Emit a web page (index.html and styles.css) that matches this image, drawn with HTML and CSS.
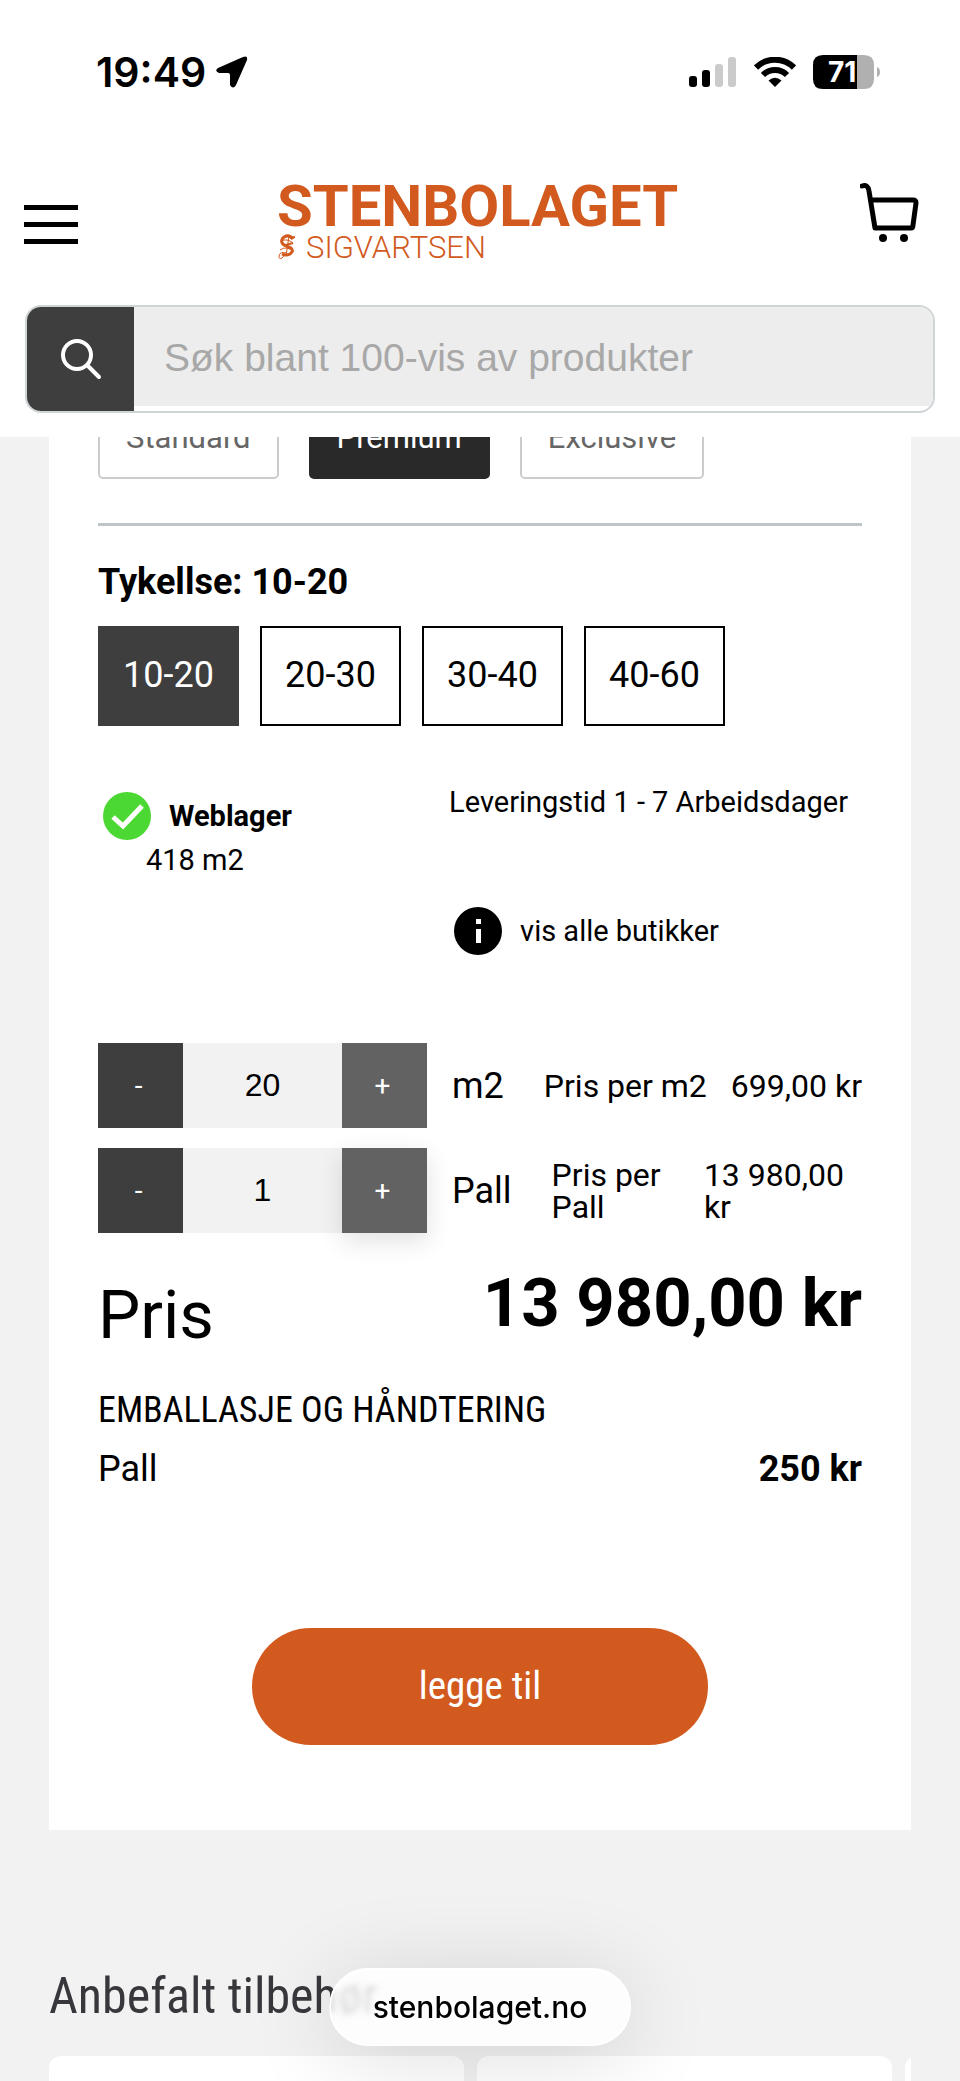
FILE: index.html
```html
<!DOCTYPE html>

<html lang="no">
  <head>
    <meta charset="UTF-8" />
    <meta name="viewport" content="width=device-width,initial-scale=1" />

    <title>Stenbolaget</title>

    <link rel="stylesheet" href="styles.css">
  </head>

  <body>
    <header class="header">
      <div class="status">
        <div class="status-group">
          <span class="time">19:49</span>
          <svg width="32" height="32" viewBox="0 0 32 32">
            <path d="M2 12 L27 1 Q32 -1 31 4 L20 29 Q17 34 14 29 L14 19 Q14 17 12 17 L3 17 Q-2 15 2 12Z" />
          </svg>
        </div>
        <div class="status-group status-icons">
          <svg width="48" height="30" viewBox="0 0 48 30">
            <rect x="0" y="19" width="8" height="11" rx="3" />
            <rect x="13" y="13" width="8" height="17" rx="3" />
            <rect x="26" y="7" width="8" height="23" rx="3" fill="#cbcbcb" />
            <rect x="39" y="0" width="8" height="30" rx="3" fill="#cbcbcb" />
          </svg>
          <svg width="42" height="30" viewBox="0 0 42 30">
            <g fill="none" stroke="#000" stroke-width="6">
              <path d="M2 10.500 A27 27 0 0 1 40 10.500" />
              <path d="M9 18 A17 17 0 0 1 33 18" />
            </g>
            <path d="M21 30 L14.500 23.500 Q21 18 27.500 23.500Z" />
          </svg>
          <svg width="68" height="34" viewBox="0 0 68 34">
            <path d="M10 0 H44 V34 H10 Q0 34 0 24 V10 Q0 0 10 0Z" />
            <path d="M44 0 H51 Q61 0 61 10 V24 Q61 34 51 34 H44Z" fill="#b0b0b0" />
            <path d="M64 12 Q67 13 67 17 Q67 21 64 22Z" fill="#b0b0b0" />
            <text class="battery-text" x="15" y="27">71</text>
          </svg>
        </div>
      </div>

      <div class="topbar">
        <button class="icon-button" type="button" aria-label="Meny">
          <svg width="54" height="40" viewBox="0 0 54 40">
            <path d="M0 2.500 H54 M0 19.500 H54 M0 36.500 H54" stroke="#000" stroke-width="5" />
          </svg>
        </button>
        <a class="logo" href="#" aria-label="Stenbolaget Sigvartsen">
          <svg width="410" height="84" viewBox="0 0 410 84">
            <text class="logo-name" x="0" y="43">STENBOLAGET</text>
            <text class="logo-sub" x="29" y="75">SIGVARTSEN</text>
            <g fill="none" stroke="#d25a1e">
              <path d="M16 56 Q12 51 7 54 Q2 58 7 62 L14 65 Q17 68 13 71 Q9 73 5 71" stroke-width="3" />
              <path d="M4 58 Q10 55 16 60 M3 67 Q10 62 17 69 M12 53 L9 73" stroke-width="1" />
              <path d="M13 55 L18 54 M9 62 L16 60" stroke-width="2" />
              <path d="M9 70 Q3 68 2 73 Q2 77 5 75 Q8 73 6 71" stroke-width="1" />
            </g>
          </svg>
        </a>
        <a class="cart" href="#" aria-label="Handlekurv">
          <svg width="60" height="60" viewBox="0 0 60 60">
            <path d="M2 3 Q8 1 9 8 L15 45 H51 Q53 45 53 42 L56 20 Q56 17 53 17 H11" fill="none" stroke="#000" stroke-width="5" stroke-linecap="round" stroke-linejoin="round" />
            <circle cx="23" cy="55" r="4" />
            <circle cx="44" cy="55" r="4" />
          </svg>
        </a>
      </div>

      <form class="search">
        <button type="submit" aria-label="Søk">
          <svg width="42" height="42" viewBox="0 0 42 42" fill="none" stroke="#fff" stroke-width="4" stroke-linecap="round">
            <circle cx="17" cy="17" r="14" />
            <path d="M28 28 L39 39" />
          </svg>
        </button>
        <input type="search" placeholder="Søk blant 100-vis av produkter" aria-label="Søk blant 100-vis av produkter" />
      </form>
    </header>

    <main>
      <section class="card">
        <div class="grades">
          <button class="grade" type="button">Standard</button>
          <button class="grade selected" type="button">Premium</button>
          <button class="grade" type="button">Exclusive</button>
        </div>

        <hr />

        <h2 class="option-title">Tykellse: 10-20</h2>
        <div class="sizes">
          <button class="size selected" type="button">10-20</button>
          <button class="size" type="button">20-30</button>
          <button class="size" type="button">30-40</button>
          <button class="size" type="button">40-60</button>
        </div>

        <div class="stock">
          <div>
            <div class="stock-line">
              <svg width="48" height="48" viewBox="0 0 48 48">
                <circle cx="24" cy="24" r="24" fill="#4cd832" />
                <path d="M10 25 L20 34 L39 14" fill="none" stroke="#fff" stroke-width="5" />
              </svg>
              <strong>Weblager</strong>
            </div>
            <p class="amount">418 m2</p>
          </div>
          <div class="delivery">
            <p>Leveringstid 1 - 7 Arbeidsdager</p>
            <button class="stores" type="button">
              <svg width="48" height="48" viewBox="0 0 48 48">
                <circle cx="24" cy="24" r="24" />
                <path d="M22 12 H27 V17 H22Z M22 22 H27 V36 H22Z" fill="#fff" />
              </svg>
              vis alle butikker
            </button>
          </div>
        </div>

        <div class="quantities">
          <div class="quantity">
            <div class="stepper">
              <button type="button" aria-label="Færre m2">-</button>
              <input id="m2" type="text" value="20" />
              <button class="plus" type="button" aria-label="Flere m2">+</button>
            </div>
            <label for="m2">m2</label>
            <div class="unit-price">
              <span>Pris per m2</span>
              <span>699,00 kr</span>
            </div>
          </div>
          <div class="quantity">
            <div class="stepper">
              <button type="button" aria-label="Færre paller">-</button>
              <input id="pall" type="text" value="1" />
              <button class="plus raised" type="button" aria-label="Flere paller">+</button>
            </div>
            <label for="pall">Pall</label>
            <div class="unit-price wrapped">
              <span>Pris per<br />Pall</span>
              <span>13 980,00<br />kr</span>
            </div>
          </div>
        </div>

        <div class="total">
          <span>Pris</span>
          <strong>13 980,00 kr</strong>
        </div>

        <h3 class="packing-title">EMBALLASJE OG HÅNDTERING</h3>
        <div class="packing">
          <span>Pall</span>
          <strong>250 kr</strong>
        </div>

        <button class="add" type="button">legge til</button>
      </section>

      <section class="related">
        <h2>Anbefalt tilbehør</h2>
        <div class="products">
          <article></article>
          <article></article>
          <article></article>
        </div>
      </section>
    </main>

    <div class="address">stenbolaget.no</div>
  </body>
</html>
```
FILE: styles.css
```css
:root {
  --color-orange: #d25a1e;
  --color-dark: #3e3e3e;
  --color-page: #f2f2f2;
  --font-family: Roboto, sans-serif;
  --font-condensed: "Roboto Condensed", Roboto, sans-serif;
  --font-system: Inter, sans-serif;
  --font-input: "Liberation Sans", Arial, sans-serif;
}

* {
  box-sizing: border-box;
  margin: 0;
  padding: 0;
}

body {
  background-color: var(--color-page);
  color: #000;
  font-family: var(--font-family);
  height: 100vh;
  overflow: hidden;
}

svg {
  display: block;
  flex: none;
}

button {
  background-color: transparent;
  border-style: none;
  color: inherit;
  font-family: inherit;
}

/* header */
.header {
  background-color: #fff;
  padding-bottom: 24px;
  position: relative;
  z-index: 1;
}

.status {
  align-items: center;
  display: flex;
  height: 144px;
  justify-content: space-between;
  padding: 0 79px 0 96px;
}

.status-group {
  align-items: center;
  display: flex;
  gap: 10px;
}

.status-icons {
  gap: 17px;
}

.time {
  font-family: var(--font-system);
  font-size: 41px;
  font-weight: 600;
  line-height: 48px;
}

.battery-text {
  fill: #fff;
  font-family: var(--font-system);
  font-size: 28px;
  font-weight: 700;
}

.topbar {
  align-items: center;
  display: flex;
  height: 161px;
  justify-content: space-between;
  padding: 0 40px 0 24px;
}

.logo {
  margin-left: 26px;
}

.logo-name {
  fill: var(--color-orange);
  font-size: 58px;
  font-weight: 700;
}

.logo-sub {
  fill: var(--color-orange);
  font-size: 31px;
  font-weight: 300;
}

.cart {
  padding-bottom: 24px;
}

.search {
  background-color: #fff;
  border: 2px solid #cfd4d7;
  border-radius: 16px;
  display: flex;
  height: 108px;
  margin: 0 25px;
  overflow: hidden;
}

.search button {
  align-items: center;
  background-color: var(--color-dark);
  display: flex;
  justify-content: center;
  width: 107px;
}

.search input {
  background-color: #ededed;
  border-style: none;
  flex: 1;
  font-family: var(--font-input);
  font-size: 39px;
  height: 99px;
  padding: 2px 30px 0;
}

.search input::placeholder {
  color: #a8a8a8;
}

/* product card */
.card {
  background-color: #fff;
  display: flow-root;
  margin: 0 49px;
  padding: 0 49px 85px;
}

/* scrolled up so that the header covers the upper half */
.grades {
  display: flex;
  gap: 30px;
  margin-top: -32px;
}

.grade {
  border: 2px solid #ccc;
  border-radius: 5px;
  color: #666;
  font-size: 31px;
  height: 74px;
  padding: 0 26px 10px;
}

.grade.selected {
  background-color: #292929;
  border-color: #292929;
  color: #fff;
}

hr {
  background-color: #bfc5c7;
  border-style: none;
  height: 3px;
  margin-top: 44px;
}

.option-title {
  font-size: 36px;
  line-height: 44px;
  margin-top: 34px;
}

.sizes {
  display: flex;
  gap: 21px;
  margin-top: 22px;
}

.size {
  border: 2px solid #000;
  font-size: 36px;
  height: 100px;
  padding-bottom: 2px;
  width: 141px;
}

.size.selected {
  background-color: var(--color-dark);
  border-color: var(--color-dark);
  color: #fff;
}

.stock {
  display: flex;
  font-size: 29px;
  justify-content: space-between;
  line-height: 36px;
  margin-top: 66px;
}

.stock-line,
.stores {
  align-items: center;
  display: flex;
  gap: 18px;
  padding-left: 5px;
}

.amount {
  padding: 2px 0 0 48px;
}

.delivery {
  padding-right: 14px;
}

.delivery p {
  margin-top: -8px;
  padding-bottom: 87px;
}

.stores {
  font-size: 29px;
}

.quantities {
  display: flex;
  flex-direction: column;
  gap: 20px;
  margin-top: 88px;
}

.quantity {
  align-items: center;
  display: flex;
}

.stepper {
  display: flex;
  height: 85px;
}

.stepper button {
  background-color: var(--color-dark);
  color: #fff;
  font-size: 28px;
  padding-right: 4px;
  width: 85px;
}

.stepper .plus {
  background-color: #626262;
}

.stepper .raised {
  box-shadow: 0 8px 24px rgb(0 0 0 / 12%);
}

.stepper input {
  background-color: var(--color-page);
  border-style: none;
  font-family: var(--font-input);
  font-size: 32px;
  text-align: center;
  width: 159px;
}

.quantity label {
  font-size: 36px;
  padding-left: 25px;
}

.unit-price {
  display: flex;
  flex: 1;
  font-size: 32px;
  justify-content: space-between;
  line-height: 32px;
  padding-left: 40px;
}

.wrapped {
  padding-right: 18px;
}

.total {
  display: flex;
  font-size: 67px;
  justify-content: space-between;
  line-height: 78px;
  margin-top: 31px;
}

.total span {
  padding-top: 12px;
}

.packing-title {
  font-family: var(--font-condensed);
  font-size: 36px;
  font-weight: 400;
  line-height: 44px;
  margin-top: 34px;
}

.packing {
  display: flex;
  font-size: 36px;
  justify-content: space-between;
  line-height: 44px;
  margin-top: 15px;
}

.add {
  background-color: var(--color-orange);
  border-radius: 60px;
  color: #fff;
  display: block;
  font-family: var(--font-condensed);
  font-size: 39px;
  height: 117px;
  margin: 137px auto 0;
  padding-bottom: 2px;
  width: 456px;
}

/* related products */
.related {
  margin: 136px 49px 0;
  overflow: hidden;
}

.related h2 {
  color: #38383c;
  font-family: var(--font-condensed);
  font-size: 50px;
  font-weight: 400;
  line-height: 60px;
}

.products {
  display: flex;
  gap: 13px;
  margin-top: 30px;
}

.products article {
  background-color: #fff;
  border-radius: 12px;
  flex: none;
  height: 200px;
  width: 415px;
}

/* browser address pill, floats over the page */
.address {
  backdrop-filter: blur(3px);
  background-color: rgb(255 255 255 / 82%);
  border: 2px solid #fff;
  border-radius: 39px;
  bottom: 35px;
  box-shadow: 0 10px 90px rgb(0 0 0 / 14%);
  font-family: var(--font-system);
  font-size: 30px;
  font-weight: 500;
  left: 50%;
  line-height: 74px;
  position: fixed;
  text-align: center;
  transform: translateX(-50%);
  width: 302px;
  z-index: 2;
}
```
